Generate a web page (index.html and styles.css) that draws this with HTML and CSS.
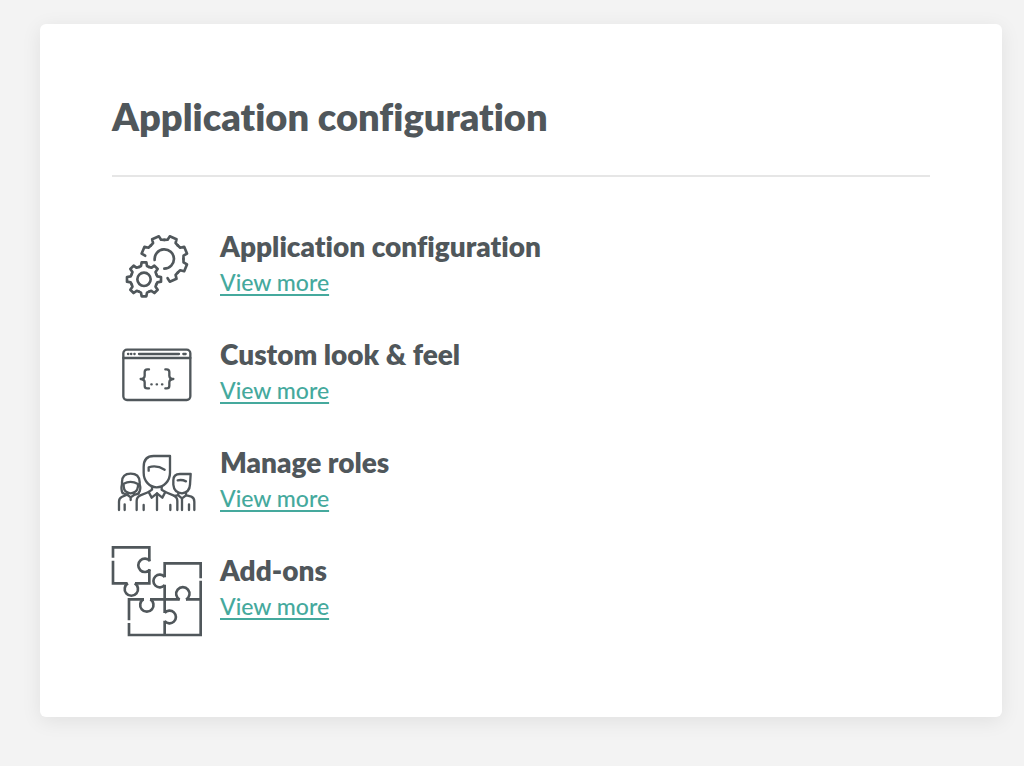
FILE: index.html
```html
<!DOCTYPE html>
<html lang="en">
<head>
<meta charset="utf-8">
<meta name="viewport" content="width=device-width, initial-scale=1">
<title>Application configuration</title>
<link rel="stylesheet" href="styles.css">
</head>
<body>
<main class="card">
  <h1 class="card-title">Application configuration</h1>
  <ul class="options">
    <li class="option">
      <svg class="icon bold" viewBox="6 -9 270 270" aria-hidden="true">
        <defs>
          <path id="small-tooth" d="M-15-37L-9-40L-7-51H7L9-40L15-37"/>
          <path id="big-tooth" d="M-22-53L-13-57L-11-69H11L13-57L22-53"/>
        </defs>
        <g transform="translate(102 163)">
          <circle r="20"/>
          <use href="#small-tooth"/>
          <use href="#small-tooth" transform="rotate(45)"/>
          <use href="#small-tooth" transform="rotate(90)"/>
          <use href="#small-tooth" transform="rotate(135)"/>
          <use href="#small-tooth" transform="rotate(180)"/>
          <use href="#small-tooth" transform="rotate(225)"/>
          <use href="#small-tooth" transform="rotate(270)"/>
          <use href="#small-tooth" transform="rotate(315)"/>
        </g>
        <g transform="translate(163 102)">
          <path d="M-29 3A29 29 0 1 1 0 29"/>
          <path d="M-13-57L-11-69H11L13-57L22-53" transform="rotate(-67.5)"/>
          <use href="#big-tooth" transform="rotate(-22.5)"/>
          <use href="#big-tooth" transform="rotate(22.5)"/>
          <use href="#big-tooth" transform="rotate(67.5)"/>
          <use href="#big-tooth" transform="rotate(112.5)"/>
          <path d="M-22-53L-13-57L-11-69H11L13-57" transform="rotate(157.5)"/>
        </g>
      </svg>
      <div class="option-text">
        <h2 class="option-title">Application configuration</h2>
        <a class="option-link" href="#application">View more</a>
      </div>
    </li>
    <li class="option">
      <svg class="icon" viewBox="6 -15 270 270" aria-hidden="true">
        <rect x="40" y="44" width="201" height="151" rx="11"/>
        <path d="M40 69H241M87 57H207M220 57H227"/>
        <path d="M54 57H55M63 57H64M73 57H74M124 148H125M140 148H141M156 148H157"/>
        <path d="M117 103H112Q104 103 104 111V122Q104 131 92 132Q104 133 104 142V152Q104 160 112 160H117M166 103H170Q178 103 178 111V122Q178 131 190 132Q178 133 178 142V152Q178 160 170 160H166"/>
      </svg>
      <div class="option-text">
        <h2 class="option-title">Custom look &amp; feel</h2>
        <a class="option-link" href="#look">View more</a>
      </div>
    </li>
    <li class="option">
      <svg class="icon" viewBox="6 -21 270 270" aria-hidden="true">
        <path d="M180 33H131Q101 33 101 66V83C101 108 119 127 140 127S180 108 180 83Z"/>
        <path d="M116 77V67Q140 59 164 74"/>
        <path d="M126 125V134L116 141L125 158L141 145L157 158L166 141L155 134V125"/>
        <path d="M116 141L91 151Q80 156 80 168V195M166 141L190 151Q202 156 202 168V195M141 145V195M101 180V195M181 180V195"/>
        <path d="M38 144Q32 134 36 117V111Q36 86 62 86T89 111V117Q94 134 86 143"/>
        <path d="M41 116V124Q42 143 62 145Q82 143 84 124V117Q62 105 41 116Z"/>
        <path d="M38 144L49 149M53 144V150L62 157L72 150V144M51 149L35 156Q27 160 27 170V195M75 149L86 146M44 178V195M62 158V165"/>
        <path d="M242 87H210Q190 87 190 106V119Q192 143 216 145Q239 142 240 119ZM203 106Q216 103 228 109"/>
        <path d="M205 144V151L216 160L228 151V144M230 151L244 155Q253 159 253 170V195M202 151L194 153M216 160V195M237 178V195"/>
      </svg>
      <div class="option-text">
        <h2 class="option-title">Manage roles</h2>
        <a class="option-link" href="#roles">View more</a>
      </div>
    </li>
    <li class="option">
      <svg class="icon bold square" viewBox="21 18 270 270" aria-hidden="true">
        <path d="M24 53V22H133V64M133 88V130H90M24 62V130H67"/>
        <path d="M135 63A20 20 0 1 0 135 89M69 130A20 20 0 1 0 89 130"/>
        <path d="M287 115V70H179V112M179 134V178M287 122V285H72V249M72 241V178H117M135 178H224M243 178H287M179 178V219M179 242V285"/>
        <path d="M179 111A19 19 0 1 0 179 135M224 179A20 20 0 1 1 243 179M115 178A20 20 0 1 0 136 178M179 219A19 19 0 1 1 179 243"/>
      </svg>
      <div class="option-text">
        <h2 class="option-title">Add-ons</h2>
        <a class="option-link" href="#addons">View more</a>
      </div>
    </li>
  </ul>
</main>
</body>
</html>
```
FILE: styles.css
```css
* {
  box-sizing: border-box;
}

body {
  margin: 0;
  padding: 24px 22px 48px 40px;
  background: #f3f3f3;
  color: #50575b;
  font-family: Lato, "Open Sans", sans-serif;
  font-variant-ligatures: none;
}

.card {
  padding: 70px 72px 72px;
  background: #fff;
  border-radius: 6px;
  box-shadow: 0 4px 20px rgba(0, 0, 0, 0.08);
}

.card-title {
  margin: 0;
  padding-bottom: 37px;
  border-bottom: 2px solid #e6e6e6;
  font-size: 38px;
  font-weight: 800;
  line-height: 44px;
}

.options {
  display: flex;
  flex-direction: column;
  gap: 18px;
  margin: 0;
  padding: 45px 0 9px;
  list-style: none;
}

.option {
  display: flex;
  align-items: flex-start;
  gap: 18px;
}

.icon {
  flex: none;
  width: 90px;
  height: 90px;
  overflow: visible;
  fill: none;
  stroke: #50575b;
  stroke-width: 7;
  stroke-linecap: round;
  stroke-linejoin: round;
}

.bold {
  stroke-width: 8;
}

.square {
  stroke-linecap: butt;
  stroke-linejoin: miter;
}

.option-text {
  padding-top: 6px;
}

.option-title {
  margin: 0;
  font-size: 28px;
  font-weight: 800;
  line-height: 36px;
}

.option-link {
  color: #45a99d;
  font-size: 23px;
  font-weight: 500;
  line-height: 36px;
  text-decoration: underline;
  text-decoration-thickness: 2px;
  text-underline-offset: 3px;
  text-decoration-skip-ink: none;
}
```
